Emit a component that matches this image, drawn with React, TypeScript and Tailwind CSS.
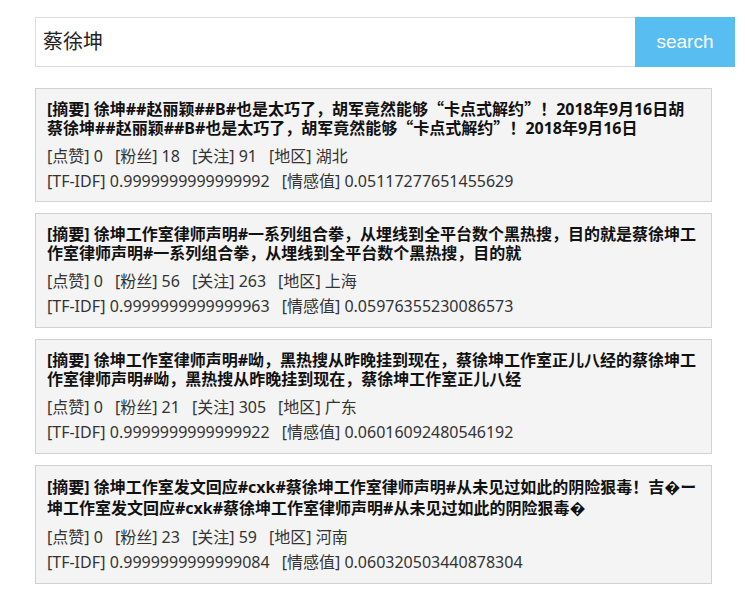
import React from "react";

type Item = {
  lines: [string, string];
  like: number;
  fans: number;
  follow: number;
  area: string;
  tfidf: string;
  senti: string;
  big?: boolean;
};

const items: Item[] = [
  {
    lines: [
      "徐坤##赵丽颖##B#也是太巧了，胡军竟然能够“卡点式解约”！2018年9月16日胡",
      "蔡徐坤##赵丽颖##B#也是太巧了，胡军竟然能够“卡点式解约”！2018年9月16日",
    ],
    like: 0,
    fans: 18,
    follow: 91,
    area: "湖北",
    tfidf: "0.9999999999999992",
    senti: "0.05117277651455629",
  },
  {
    lines: [
      "徐坤工作室律师声明#一系列组合拳，从埋线到全平台数个黑热搜，目的就是蔡徐坤工",
      "作室律师声明#一系列组合拳，从埋线到全平台数个黑热搜，目的就",
    ],
    like: 0,
    fans: 56,
    follow: 263,
    area: "上海",
    tfidf: "0.9999999999999963",
    senti: "0.05976355230086573",
  },
  {
    lines: [
      "徐坤工作室律师声明#呦，黑热搜从昨晚挂到现在，蔡徐坤工作室正儿八经的蔡徐坤工",
      "作室律师声明#呦，黑热搜从昨晚挂到现在，蔡徐坤工作室正儿八经",
    ],
    like: 0,
    fans: 21,
    follow: 305,
    area: "广东",
    tfidf: "0.9999999999999922",
    senti: "0.06016092480546192",
  },
  {
    lines: [
      "徐坤工作室发文回应#cxk#蔡徐坤工作室律师声明#从未见过如此的阴险狠毒！吉\uFFFDー",
      "坤工作室发文回应#cxk#蔡徐坤工作室律师声明#从未见过如此的阴险狠毒\uFFFD",
    ],
    like: 0,
    fans: 23,
    follow: 59,
    area: "河南",
    tfidf: "0.9999999999999084",
    senti: "0.060320503440878304",
    big: true,
  },
];

const font = {
  fontFamily: '"Noto Sans", "Noto Sans CJK SC", sans-serif',
};

const cjk = { fontFamily: '"Noto Sans CJK SC", sans-serif' };

function Rich({ text }: { text: string }) {
  const parts = text.split(/([“”])/);
  return (
    <>
      {parts.map((p, i) =>
        p === "“" || p === "”" ? (
          <span key={i} style={cjk} className="leading-none">
            {p}
          </span>
        ) : (
          <React.Fragment key={i}>{p}</React.Fragment>
        )
      )}
    </>
  );
}

function Meta({ label, value, last }: { label: string; value: string | number; last?: boolean }) {
  return (
    <span className={last ? "" : "mr-[12px]"}>
      [{label}] {value}
    </span>
  );
}

export default function App() {
  return (
    <div className="w-[745px] min-h-[595px] bg-white text-[#333]" style={font}>
      <div className="pl-[35px] pt-[17px]">
        <div className="flex h-[50px] w-[700px]">
          <div className="flex flex-1 items-center border border-[#dcdcdc] border-r-0 pl-[7px] text-[20px] text-[#222]">
            蔡徐坤
          </div>
          <div
            className="flex w-[100px] items-center justify-center bg-[#58bdf1] text-[19px] text-white"
            style={{ fontFamily: '"Liberation Sans", Arial, sans-serif' }}
          >
            search
          </div>
        </div>
        <div className="mt-[21px] flex w-[677px] flex-col gap-[11px]">
          {items.map((it, i) => (
            <div
              key={i}
              className={
                "border border-[#d2d2d2] bg-[#f4f4f4] pl-[11px] pr-[8px] pt-[11px] " +
                (i === 0 ? "pb-[7px]" : "pb-[8px]")
              }
            >
              <div className="whitespace-nowrap text-[16px] font-bold text-[#111]">
                <div className={it.big ? "h-[21px] leading-[21px]" : "h-[19px] leading-[19px]"}>
                  [摘要] <Rich text={it.lines[0]} />
                </div>
                <div className={it.big ? "h-[21px] leading-[21px]" : "h-[19px] leading-[19px]"}>
                  <Rich text={it.lines[1]} />
                </div>
              </div>
              <div className="mt-[6px] text-[16px] leading-[25px] whitespace-nowrap">
                <Meta label="点赞" value={it.like} />
                <Meta label="粉丝" value={it.fans} />
                <Meta label="关注" value={it.follow} />
                <Meta label="地区" value={it.area} last />
              </div>
              <div className="text-[16px] leading-[25px] whitespace-nowrap">
                <Meta label="TF-IDF" value={it.tfidf} />
                <Meta label="情感值" value={it.senti} last />
              </div>
            </div>
          ))}
        </div>
      </div>
    </div>
  );
}
